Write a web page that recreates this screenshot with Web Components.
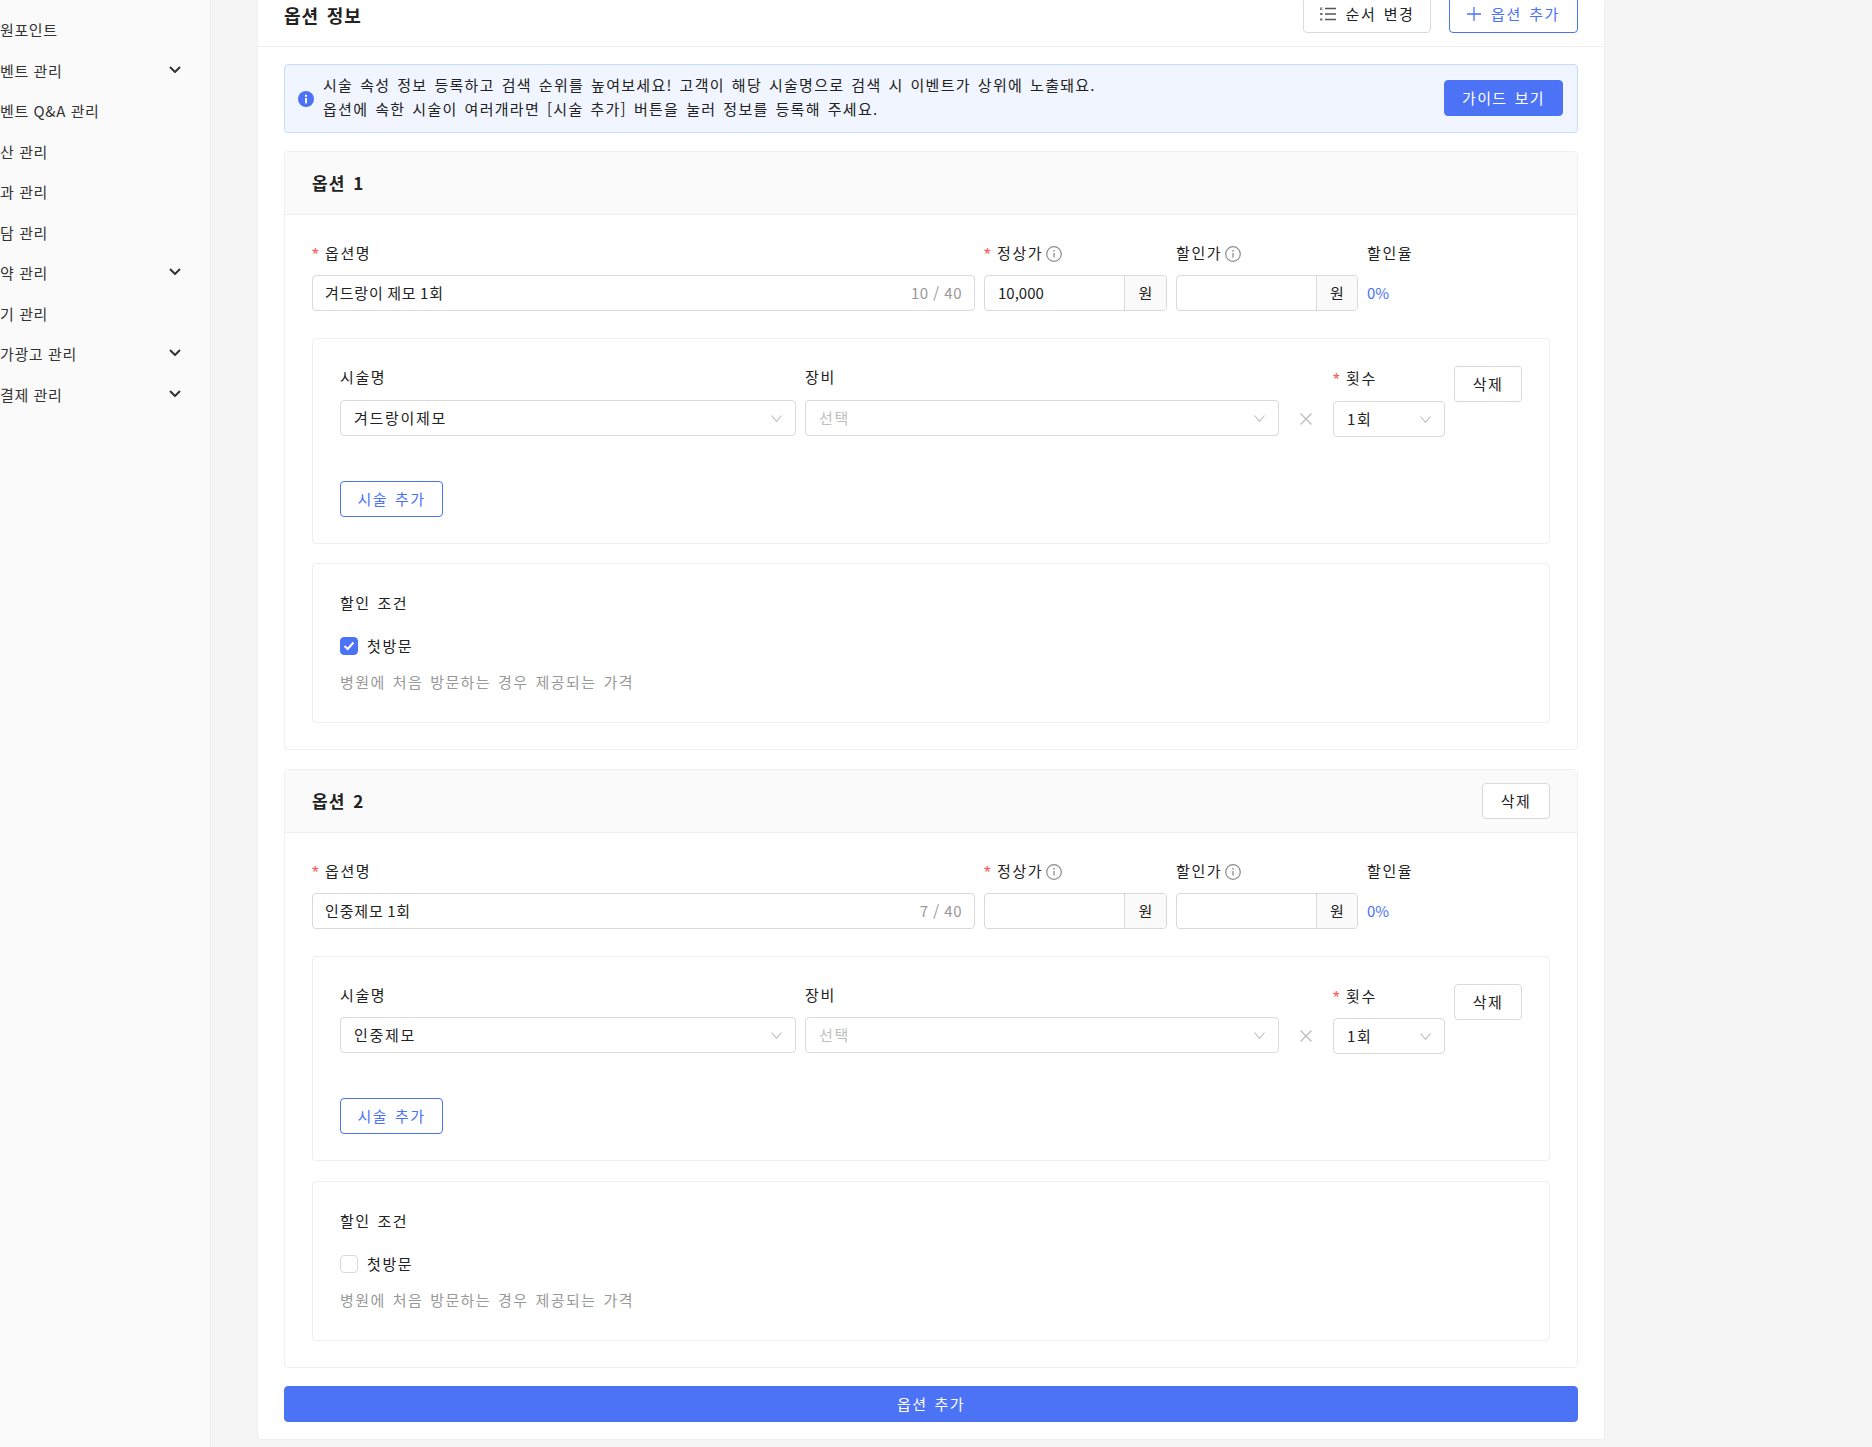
<!DOCTYPE html>
<html lang="ko">
<head>
<meta charset="utf-8">
<title>옵션 정보</title>
<style>
html, body { margin: 0; height: 1447px; overflow: hidden; }
body {
  background: #f5f5f5;
  color: #222;
  font: 15px/24px "Noto Sans CJK KR", "Noto Sans", sans-serif;
  letter-spacing: 1.4px;
  word-spacing: 1.5px;
  display: grid;
  grid-template-columns: 211px 1348px;
  column-gap: 46px;
  align-items: start;
}
</style>
</head>
<body>
<side-menu>
  <side-item>원포인트</side-item>
  <side-item chev>벤트 관리</side-item>
  <side-item>벤트 Q&amp;A 관리</side-item>
  <side-item>산 관리</side-item>
  <side-item>과 관리</side-item>
  <side-item>담 관리</side-item>
  <side-item chev>약 관리</side-item>
  <side-item>기 관리</side-item>
  <side-item chev>가광고 관리</side-item>
  <side-item chev>결제 관리</side-item>
</side-menu>

<main-panel>
  <info-alert>
    <span>시술 속성 정보 등록하고 검색 순위를 높여보세요! 고객이 해당 시술명으로 검색 시 이벤트가 상위에 노출돼요.</span><br>
    <span>옵션에 속한 시술이 여러개라면 [시술 추가] 버튼을 눌러 정보를 등록해 주세요.</span>
  </info-alert>
  <option-card num="1" name="겨드랑이 제모 1회" count="10 / 40" price="10,000" proc="겨드랑이제모" checked></option-card>
  <option-card num="2" name="인중제모 1회" count="7 / 40" proc="인중제모" deletable></option-card>
  <ui-btn kind="primary" block>옵션 추가</ui-btn>
</main-panel>

<script>
// jshint asi: true, esversion: 6
const INFO = `<svg width="16" height="16" viewBox="0 0 16 16" fill="none"><circle cx="8" cy="8" r="7.3" stroke="#8c8c8c" stroke-width="1.2"/><path d="M8 7v4.6" stroke="#8c8c8c" stroke-width="1.3"/><circle cx="8" cy="4.8" r=".85" fill="#8c8c8c"/></svg>`
const CHEVRON = `<svg width="11" height="7" viewBox="0 0 11 7" fill="none"><path d="M.5.5l5 5.8 5-5.8" stroke="#bdbdbd" stroke-width="1.1"/></svg>`

class SideMenu extends HTMLElement {
  constructor() {
    super()
    this.attachShadow({mode: 'open'}).innerHTML = `
    <style>
    :host { display: block; box-sizing: border-box; height: 1447px; padding-top: 10px;
      background: #fafafa; border-right: 1px solid #ececec; overflow: hidden; }
    </style><slot></slot>`
  }
}

class SideItem extends HTMLElement {
  constructor() {
    super()
    const chev = this.hasAttribute('chev')
    this.attachShadow({mode: 'open'}).innerHTML = `
    <style>
    :host { display: flex; align-items: center; justify-content: space-between; height: 40.5px;
      padding-right: 29px; color: #333; letter-spacing: .6px; word-spacing: 0; white-space: nowrap; }
    svg { display: block; margin-top: -3px; }
    </style>
    <span><slot></slot></span>
    ${chev ? `<svg width="12" height="7" viewBox="0 0 12 7" fill="none"><path d="M1 1l5 5 5-5" stroke="#333" stroke-width="2"/></svg>` : ''}`
  }
}

class MainPanel extends HTMLElement {
  constructor() {
    super()
    this.attachShadow({mode: 'open'}).innerHTML = `
    <style>
    :host { display: block; box-sizing: border-box; height: 1443px; margin-top: -3px;
      background: #fff; border: 1px solid #efefef; border-radius: 4px; }
    header { display: flex; align-items: flex-start; justify-content: space-between;
      height: 48px; padding: 0 26px; border-bottom: 1px solid #efefef; box-sizing: content-box; }
    h2 { margin: 0; font-size: 18px; line-height: 34px; font-weight: 700; color: #222; letter-spacing: 1px; }
    .acts { display: flex; gap: 18px; margin-top: -1px; }
    .acts ui-btn { padding-bottom: 2px; letter-spacing: 1.6px; }
    .body { display: flex; flex-direction: column; gap: 18px; padding: 17px 26px 0; }
    svg { display: block; }
    </style>
    <header>
      <h2>옵션 정보</h2>
      <div class="acts">
        <ui-btn icon width="128">
          <svg slot="icon" width="16" height="14" viewBox="0 0 16 14" fill="none">
            <path d="M5 1.5h11M5 7h11M5 12.5h11" stroke="#555" stroke-width="1.4"/>
            <path d="M0 .5h2.5v1H1v.5h1.5v1H0zM0 6h2.5v2H0zM0 11.5h2.5v2H0z" fill="#777"/>
          </svg>순서 변경</ui-btn>
        <ui-btn kind="outline" icon width="129">
          <svg slot="icon" width="14" height="14" viewBox="0 0 14 14" fill="none"><path d="M7 0v14M0 7h14" stroke="#4c72f6" stroke-width="1.3"/></svg>옵션 추가</ui-btn>
      </div>
    </header>
    <div class="body"><slot></slot></div>`
  }
}

class UiBtn extends HTMLElement {
  constructor() {
    super()
    const w = this.getAttribute('width')
    this.attachShadow({mode: 'open'}).innerHTML = `
    <style>
    :host { display: inline-flex; align-items: center; justify-content: center; gap: 10px; box-sizing: border-box;
      height: 36px; ${w ? `width:${w}px;` : ''} padding: 0; border: 1px solid #d9d9d9; border-radius: 4px;
      background: #fff; color: #222; white-space: nowrap; }
    :host([kind=outline]) { border-color: #4c72f6; color: #4c72f6; }
    :host([kind=primary]) { border-color: #4c72f6; background: #4c72f6; color: #fff; }
    :host([block]) { display: flex; width: 100%; }
    </style>
    <slot name="icon"></slot><slot></slot>`
  }
}

class InfoAlert extends HTMLElement {
  constructor() {
    super()
    this.attachShadow({mode: 'open'}).innerHTML = `
    <style>
    :host { display: flex; align-items: center; box-sizing: border-box; height: 69px; padding: 0 14px 0 13px;
      background: #f0f5ff; border: 1px solid #c6dcff; border-radius: 4px; color: #222; letter-spacing: 1.28px; }
    svg { flex: none; margin-right: 9px; }
    .txt { flex: 1; padding-bottom: 3px; }
    ui-btn { margin-top: -1px; letter-spacing: 1.4px; }
    </style>
    <svg width="16" height="16" viewBox="0 0 16 16"><circle cx="8" cy="8" r="8" fill="#4c72f6"/><rect x="7" y="7" width="2" height="5.4" fill="#fff"/><rect x="7" y="3.8" width="2" height="2" fill="#fff"/></svg>
    <div class="txt"><slot></slot></div>
    <ui-btn kind="primary" width="119">가이드 보기</ui-btn>`
  }
}

class FieldLabel extends HTMLElement {
  constructor() {
    super()
    this.attachShadow({mode: 'open'}).innerHTML = `
    <style>
    :host { display: flex; align-items: center; box-sizing: border-box; height: 24px; padding-bottom: 2px; color: #222;
      white-space: nowrap; letter-spacing: 1.6px; word-spacing: 0; }
    b { font: 400 17px/14px "Liberation Sans", sans-serif; color: #ff4d4f; width: 13px; flex: none; margin-top: 4px; }
    svg { margin-left: 3px; margin-top: 2px; }
    </style>
    ${this.hasAttribute('req') ? '<b>*</b>' : ''}<slot></slot>${this.hasAttribute('info') ? INFO : ''}`
  }
}

class TextBox extends HTMLElement {
  constructor() {
    super()
    const count = this.getAttribute('count')
    const addon = this.getAttribute('addon')
    const aw = this.getAttribute('addon-w') || 41
    this.attachShadow({mode: 'open'}).innerHTML = `
    <style>
    :host { display: flex; box-sizing: border-box; height: 36px; background: #fff; border: 1px solid #d9d9d9;
      border-radius: 4px; overflow: hidden; color: #222; letter-spacing: .85px; word-spacing: -1.5px; }
    .v { flex: 1; padding: 0 12px 0 12px; line-height: 34px; white-space: nowrap; }
    :host([num]) .v { letter-spacing: 0; padding-left: 13px; }
    .c { padding-right: 12px; line-height: 34px; color: #999; letter-spacing: .5px; word-spacing: 0; }
    .a { flex: none; width: ${aw}px; text-align: center; line-height: 34px; background: #fafafa;
      border-left: 1px solid #d9d9d9; letter-spacing: 0; }
    </style>
    <div class="v"><slot></slot></div>
    ${count ? `<div class="c">${count}</div>` : ''}${addon ? `<div class="a">${addon}</div>` : ''}`
  }
}

class SelectBox extends HTMLElement {
  constructor() {
    super()
    this.attachShadow({mode: 'open'}).innerHTML = `
    <style>
    :host { display: flex; align-items: center; justify-content: space-between; box-sizing: border-box; height: 36px;
      padding: 0 13px 0 13px; background: #fff; border: 1px solid #d9d9d9; border-radius: 4px; color: #222; letter-spacing: 1.7px; word-spacing: 0; }
    :host([ph]) { color: #bfbfbf; }
    svg { display: block; }
    </style>
    <span><slot></slot></span>${CHEVRON}`
  }
}

class OptionCard extends HTMLElement {
  constructor() {
    super()
    const a = n => this.getAttribute(n) || ''
    this.attachShadow({mode: 'open'}).innerHTML = `
    <style>
    :host { display: block; border: 1px solid #efefef; border-radius: 4px; background: #fff; }
    :host([deletable]) { margin-top: 1px; }
    .head { display: flex; align-items: center; justify-content: space-between; box-sizing: border-box; height: 63px;
      padding: 0 27px; background: #fafafa; border-bottom: 1px solid #efefef; }
    h3 { margin: 0; font-size: 17px; font-weight: 700; color: #222; letter-spacing: 1.2px; padding-bottom: 1px; }
    .body { padding: 27px 27px 26px; }
    .row { display: grid; grid-template-columns: 663px 183px 182px 1fr; column-gap: 9px; row-gap: 9px; margin-bottom: 27px; }
    .rate { color: #4c72f6; line-height: 35px; height: 36px; letter-spacing: 0; }
    .box { box-sizing: border-box; border: 1px solid #efefef; border-radius: 4px; padding: 27px 27px 26px; }
    .proc { display: grid; grid-template-columns: 456px 483px 54px 112px 77px; height: 71px; }
    .proc > div { display: flex; flex-direction: column; gap: 10px; }
    :host([deletable]) .proc { height: 70px; }
    :host([deletable]) .proc > div { gap: 9px; }
    .c2 { margin-left: 9px; }
    .c3 { align-items: center; padding-top: 47px; box-sizing: border-box; }
    :host([deletable]) .c3 { padding-top: 46px; }
    .c4 { padding-top: 1px; }
    .c5 { margin-left: 9px; width: 68px; }
    .add { margin-top: 44px; }
    .disc { margin-top: 19px; padding-bottom: 28px; }
    :host([deletable]) .disc { margin-top: 20px; }
    .disc .t { letter-spacing: 1.4px; }
    .check { display: flex; align-items: center; gap: 9px; margin-top: 22px; height: 18px; letter-spacing: 1.6px; }
    .tick { box-sizing: border-box; width: 18px; height: 18px; border: 1px solid #d9d9d9; border-radius: 4px; background: #fff; }
    .tick.on { border-color: #4c72f6; background: #4c72f6; display: flex; align-items: center; justify-content: center; }
    .hint { margin-top: 15px; color: #999; }
    </style>
    <div class="head"><h3>옵션 ${a('num')}</h3>${this.hasAttribute('deletable') ? '<ui-btn width="68">삭제</ui-btn>' : ''}</div>
    <div class="body">
      <div class="row">
        <field-label req>옵션명</field-label>
        <field-label req info>정상가</field-label>
        <field-label info>할인가</field-label>
        <field-label>할인율</field-label>
        <text-box count="${a('count')}">${a('name')}</text-box>
        <text-box num addon="원">${a('price')}</text-box>
        <text-box num addon="원" addon-w="40"></text-box>
        <div class="rate">0%</div>
      </div>
      <div class="box">
        <div class="proc">
          <div class="c1"><field-label>시술명</field-label><select-box>${a('proc')}</select-box></div>
          <div class="c2"><field-label>장비</field-label><select-box ph>선택</select-box></div>
          <div class="c3"><svg width="12" height="12" viewBox="0 0 12 12" fill="none"><path d="M.5.5l11 11M11.5.5l-11 11" stroke="#bdbdbd" stroke-width="1.3"/></svg></div>
          <div class="c4"><field-label req>횟수</field-label><select-box>1회</select-box></div>
          <div class="c5"><ui-btn width="68">삭제</ui-btn></div>
        </div>
        <div class="add"><ui-btn kind="outline" width="103">시술 추가</ui-btn></div>
      </div>
      <div class="box disc">
        <div class="t">할인 조건</div>
        <div class="check">${this.hasAttribute('checked')
          ? `<span class="tick on"><svg width="12" height="10" viewBox="0 0 12 10" fill="none"><path d="M1.5 5l3.2 3 5.8-6.5" stroke="#fff" stroke-width="2"/></svg></span>`
          : `<span class="tick"></span>`}<span>첫방문</span></div>
        <div class="hint">병원에 처음 방문하는 경우 제공되는 가격</div>
      </div>
    </div>`
  }
}

customElements.define('ui-btn', UiBtn)
customElements.define('side-menu', SideMenu)
customElements.define('side-item', SideItem)
customElements.define('main-panel', MainPanel)
customElements.define('info-alert', InfoAlert)
customElements.define('field-label', FieldLabel)
customElements.define('text-box', TextBox)
customElements.define('select-box', SelectBox)
customElements.define('option-card', OptionCard)
</script>
</body>
</html>
